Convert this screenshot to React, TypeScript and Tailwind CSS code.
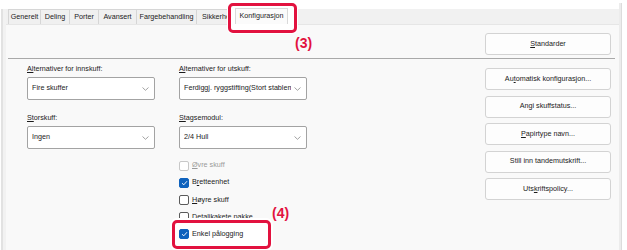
import React from "react";

const RED = "border-[#e2123f]";

function Tab(props: { label: string; width: string }): JSX.Element {
  return (
    <div
      className={`${props.width} h-[15px] border border-b-0 border-[#d6d6d6] bg-[#f0f0f0] flex items-center justify-center overflow-hidden whitespace-nowrap -ml-px first:ml-0`}
    >
      {props.label}
    </div>
  );
}

function Acc(props: { children: string }): JSX.Element {
  return <span className="underline underline-offset-[1px]">{props.children}</span>;
}

function SelectField(props: { label: React.ReactNode; value: string; className?: string }): JSX.Element {
  return (
    <div className={props.className}>
      <div className="h-[9px] leading-[9px] whitespace-nowrap">{props.label}</div>
      <div className="mt-[4px] h-[23px] w-[128px] bg-white border border-[#a3a3a3] rounded-[2px] flex items-center pl-[4px] pr-[5px]">
        <span className="flex-1 overflow-hidden whitespace-nowrap">{props.value}</span>
        <svg width="7" height="4" viewBox="0 0 7 4" className="ml-[3px] shrink-0">
          <path d="M0.5 0.5 L3.5 3.3 L6.5 0.5" fill="none" stroke="#8a8a8a" strokeWidth="0.8" />
        </svg>
      </div>
    </div>
  );
}

function Check(props: { checked?: boolean; disabled?: boolean; children: React.ReactNode }): JSX.Element {
  const box = props.checked
    ? "bg-[#0f62bd] border-[#0f62bd]"
    : props.disabled
      ? "bg-white border-[#c8c8c8]"
      : "bg-white border-[#5a5a5a]";
  return (
    <div className={`h-[17.2px] flex items-center gap-[3px] ${props.disabled ? "text-[#9a9a9a]" : ""}`}>
      <div className={`w-[10px] h-[10px] rounded-[2px] border flex items-center justify-center ${box}`}>
        {props.checked && (
          <svg width="7" height="6" viewBox="0 0 7 6">
            <path d="M1 3.2 L2.8 4.8 L6 1.2" fill="none" stroke="white" strokeWidth="0.9" />
          </svg>
        )}
      </div>
      <span className="whitespace-nowrap">{props.children}</span>
    </div>
  );
}

function Btn(props: { children: React.ReactNode }): JSX.Element {
  return (
    <div className="h-[22px] w-[126px] bg-[#fdfdfd] border border-[#d3d3d3] rounded-[3px] flex items-center justify-center whitespace-nowrap">
      {props.children}
    </div>
  );
}

export default function App(): JSX.Element {
  return (
    <div className="w-[627px] h-[250px] bg-white overflow-hidden relative font-['Liberation_Sans',Arial,sans-serif] text-[7.2px] text-[#1b1b1b]">
      <div className="flex h-full pt-[3px]">
        <div className="w-[6px] mt-[6px] flex">
          <div className="ml-px w-[2px] bg-[#e2e2e2]" />
          <div className="flex-1 bg-[#f2f2f2]" />
        </div>
        <div className="flex-1 flex flex-col">
          <div className="h-[21px] flex items-start">
            <div className="mt-[6px] h-[15px] flex-1 bg-[#f1f1f1] flex items-end pl-[2px]">
              <Tab label="Generelt" width="w-[33px]" />
              <Tab label="Deling" width="w-[30px]" />
              <Tab label="Porter" width="w-[30px]" />
              <Tab label="Avansert" width="w-[39px]" />
              <Tab label="Fargebehandling" width="w-[61px]" />
              <div className="w-[36px] h-[15px] border border-b-0 border-[#d6d6d6] bg-[#f0f0f0] -ml-px overflow-hidden whitespace-nowrap flex items-center pl-[5px]">
                Sikkerhet
              </div>
              <div
                className={`relative -ml-[4px] -mt-[6px] self-start mb-[-9px] h-[30px] w-[69px] border-[3px] ${RED} rounded-[5px] bg-white pl-[4px] pt-[2px] ring-1 ring-white`}
              >
                <div className="h-[16px] w-[53px] border border-b-0 border-[#d9d9d9] bg-[#fbfbfb] flex items-center justify-center">
                  Konfigurasjon
                </div>
              </div>
            </div>
          </div>
          <div className="flex-1 bg-[#f9f9f9] border-t border-[#e6e6e6] flex flex-col">
            <div className="h-[33px] flex justify-end pr-[8px] pt-[8px]">
              <Btn>
                <Acc>S</Acc>tandarder
              </Btn>
            </div>
            <div className="h-px bg-[#a9a9a9] ml-[2px] mr-[4px]" />
            <div className="flex flex-1">
              <div className="flex pl-[21px] pt-[5px] gap-[24px]">
                <div>
                  <SelectField
                    label={
                      <>
                        <Acc>Al</Acc>ternativer for innskuff:
                      </>
                    }
                    value="Fire skuffer"
                  />
                  <SelectField
                    className="mt-[13px]"
                    label={
                      <>
                        <Acc>St</Acc>orskuff:
                      </>
                    }
                    value="Ingen"
                  />
                </div>
                <div>
                  <SelectField
                    label={
                      <>
                        <Acc>Al</Acc>ternativer for utskuff:
                      </>
                    }
                    value="Ferdiggj. ryggstifting(Stort stablemagasin)"
                  />
                  <SelectField
                    className="mt-[13px]"
                    label={
                      <>
                        <Acc>St</Acc>agsemodul:
                      </>
                    }
                    value="2/4 Hull"
                  />
                  <div className="mt-[8px]">
                    <Check disabled>
                      <Acc>Ø</Acc>vre skuff
                    </Check>
                    <Check checked>
                      B<Acc>r</Acc>etteenhet
                    </Check>
                    <Check>
                      <Acc>H</Acc>øyre skuff
                    </Check>
                    <Check>Detaljkakete pakke</Check>
                    <div
                      className={`relative -ml-[7px] -mt-[6px] w-[99px] h-[29px] border-[3px] ${RED} rounded-[5px] bg-white pl-[4px] pt-[3px] ring-2 ring-white`}
                    >
                      <Check checked>Enkel pålogging</Check>
                    </div>
                  </div>
                </div>
              </div>
              <div className="ml-auto pr-[8px] pt-[9px] flex flex-col gap-[5.5px]">
                <Btn>
                  Au<Acc>t</Acc>omatisk konfigurasjon...
                </Btn>
                <Btn>Angi skuffstatus...</Btn>
                <Btn>
                  <Acc>P</Acc>apirtype navn...
                </Btn>
                <Btn>Still inn tandemutskrift...</Btn>
                <Btn>
                  Uts<Acc>k</Acc>riftspolicy...
                </Btn>
              </div>
            </div>
          </div>
        </div>
        <div className="w-[8px] flex">
          <div className="w-[2px] bg-[#ececec]" />
          <div className="w-px bg-[#dcdcdc]" />
          <div className="flex-1 bg-white" />
        </div>
      </div>
      <div className="absolute left-[295px] top-[36px] text-[14px] font-bold text-[#e2123f] leading-none">(3)</div>
      <div className="absolute left-[272px] top-[206px] text-[14px] font-bold text-[#e2123f] leading-none">(4)</div>
    </div>
  );
}
